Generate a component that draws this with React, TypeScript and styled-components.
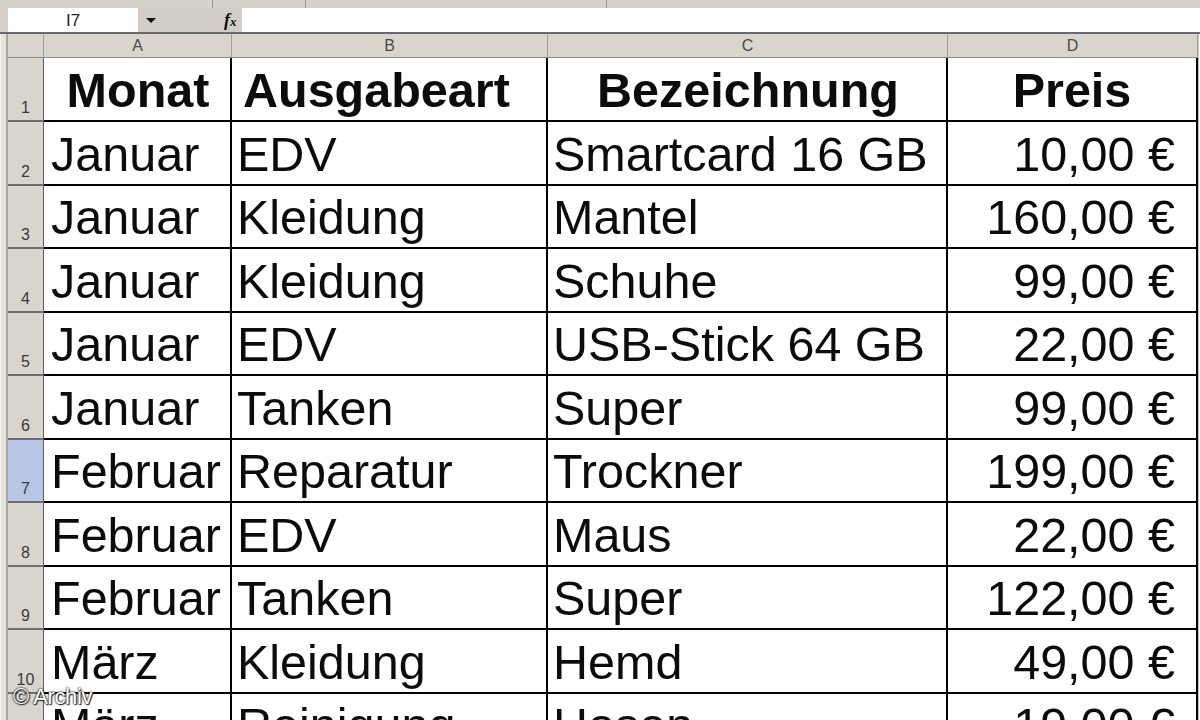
import React from "react";
import styled, { createGlobalStyle } from "styled-components";

const GlobalStyle = createGlobalStyle`
  html, body { margin: 0; padding: 0; background: #ffffff; }
  body { font-family: "Liberation Sans", Arial, sans-serif; overflow: hidden; }
  * { box-sizing: border-box; }
`;

const Page = styled.div`
  position: relative;
  width: 1200px;
  height: 720px;
  overflow: hidden;
  background: #ffffff;
  display: flex;
  flex-direction: column;
`;

const TopStrip = styled.div`
  height: 8px;
  flex: none;
  background: #d6d2ca;
  display: flex;
  align-items: stretch;
`;

const StripSep = styled.div<{ $left: number }>`
  margin-left: ${(p) => p.$left}px;
  width: 1px;
  background: #9c988f;
`;

const FormulaBar = styled.div`
  height: 24px;
  flex: none;
  display: flex;
  background: #d6d2ca;
  padding-left: 8px;
`;

const NameBox = styled.div`
  width: 130px;
  background: #ffffff;
  display: flex;
  align-items: center;
  justify-content: center;
  font-size: 17px;
  color: #222;
  padding-top: 1px;
`;

const NameControls = styled.div`
  width: 104px;
  display: flex;
  align-items: center;
  background: #d2cec6;
`;

const DropArrow = styled.div`
  margin-left: 8px;
  width: 0;
  height: 0;
  border-left: 5px solid transparent;
  border-right: 5px solid transparent;
  border-top: 5px solid #111;
`;

const Fx = styled.div`
  margin-left: 68px;
  font-family: "Liberation Serif", "Times New Roman", serif;
  font-style: italic;
  font-weight: bold;
  font-size: 18px;
  color: #111;
  line-height: 1;
  & span { font-size: 13px; }
`;

const FormulaInput = styled.div`
  flex: 1;
  background: #ffffff;
`;

const Divider = styled.div`
  height: 2px;
  flex: none;
  background: #6a6a6a;
`;

const Body = styled.div`
  flex: 1;
  display: flex;
  min-height: 0;
`;

const LeftFrame = styled.div`
  width: 8px;
  flex: none;
  background: #e6e3dc;
  border-left: 1px solid #f4f2ee;
  border-right: 2px solid #a9a59d;
`;

const Grid = styled.div`
  display: grid;
  grid-template-columns: 36px 188px 316px 400px 250px;
  grid-template-rows: 24px 64px repeat(10, 63.5px);
  align-content: start;
`;

const RightFill = styled.div`
  flex: 1;
  background: #ffffff;
  border-left: 1px solid #c8c8c8;
`;

const Corner = styled.div`
  background: #d9d5cd;
  border-right: 1px solid #a29e96;
  border-bottom: 1px solid #8e8a84;
`;

const ColHead = styled.div`
  background: #d9d5cd;
  border-right: 1px solid #a29e96;
  border-bottom: 1px solid #8e8a84;
  display: flex;
  align-items: center;
  justify-content: center;
  font-size: 16px;
  color: #4a4a4a;
  padding-top: 1px;
`;

const RowHead = styled.div<{ $active?: boolean }>`
  background: ${(p) => (p.$active ? "#b9c5e4" : "#d9d5cd")};
  border-right: 1px solid #5e5e5e;
  border-bottom: 2px solid #6e6e6e;
  display: flex;
  align-items: flex-end;
  justify-content: center;
  font-size: 16px;
  color: #3a3a3a;
  padding-bottom: 3px;
`;

type Align = "left" | "center" | "right";

const Cell = styled.div<{ $align: Align; $bold?: boolean; $indent?: number }>`
  background: #ffffff;
  border-right: 2px solid #000;
  border-bottom: 2px solid #000;
  display: flex;
  align-items: flex-end;
  justify-content: ${(p) =>
    p.$align === "left" ? "flex-start" : p.$align === "right" ? "flex-end" : "center"};
  padding-left: ${(p) => (p.$indent ?? 4)}px;
  padding-right: ${(p) => (p.$align === "right" ? 21 : 2)}px;
  padding-bottom: 6px;
  font-size: 48.5px;
  line-height: 48px;
  font-weight: ${(p) => (p.$bold ? 700 : 400)};
  color: #0c0c0c;
  white-space: nowrap;
  overflow: hidden;
`;

const Watermark = styled.div`
  position: absolute;
  left: 13px;
  top: 684px;
  font-size: 22px;
  color: #ffffff;
  letter-spacing: -0.4px;
  text-shadow: 0 0 2px #222, 0 0 2px #222, 1px 1px 1px #333;
`;

const rows: [string, string, string, string][] = [
  ["Januar", "EDV", "Smartcard 16 GB", "10,00 €"],
  ["Januar", "Kleidung", "Mantel", "160,00 €"],
  ["Januar", "Kleidung", "Schuhe", "99,00 €"],
  ["Januar", "EDV", "USB-Stick 64 GB", "22,00 €"],
  ["Januar", "Tanken", "Super", "99,00 €"],
  ["Februar", "Reparatur", "Trockner", "199,00 €"],
  ["Februar", "EDV", "Maus", "22,00 €"],
  ["Februar", "Tanken", "Super", "122,00 €"],
  ["März", "Kleidung", "Hemd", "49,00 €"],
  ["März", "Reinigung", "Hosen", "19,00 €"],
];

export default function App() {
  return (
    <Page>
      <GlobalStyle />
      <TopStrip>
        <StripSep $left={212} />
        <StripSep $left={92} />
        <StripSep $left={300} />
      </TopStrip>
      <FormulaBar>
        <NameBox>I7</NameBox>
        <NameControls>
          <DropArrow />
          <Fx>
            f<span>x</span>
          </Fx>
        </NameControls>
        <FormulaInput />
      </FormulaBar>
      <Divider />
      <Body>
        <LeftFrame />
        <Grid>
          <Corner />
          {["A", "B", "C", "D"].map((c) => (
            <ColHead key={c}>{c}</ColHead>
          ))}
          <RowHead>1</RowHead>
          <Cell $align="center" $bold>Monat</Cell>
          <Cell $align="left" $bold $indent={11}>Ausgabeart</Cell>
          <Cell $align="center" $bold>Bezeichnung</Cell>
          <Cell $align="center" $bold $indent={2}>Preis</Cell>
          {rows.map((r, i) => (
            <React.Fragment key={i}>
              <RowHead $active={i + 2 === 7}>{i + 2}</RowHead>
              <Cell $align="left" $indent={7}>{r[0]}</Cell>
              <Cell $align="left" $indent={5}>{r[1]}</Cell>
              <Cell $align="left" $indent={5}>{r[2]}</Cell>
              <Cell $align="right">{r[3]}</Cell>
            </React.Fragment>
          ))}
        </Grid>
        <RightFill />
      </Body>
      <Watermark>© Archiv</Watermark>
    </Page>
  );
}
